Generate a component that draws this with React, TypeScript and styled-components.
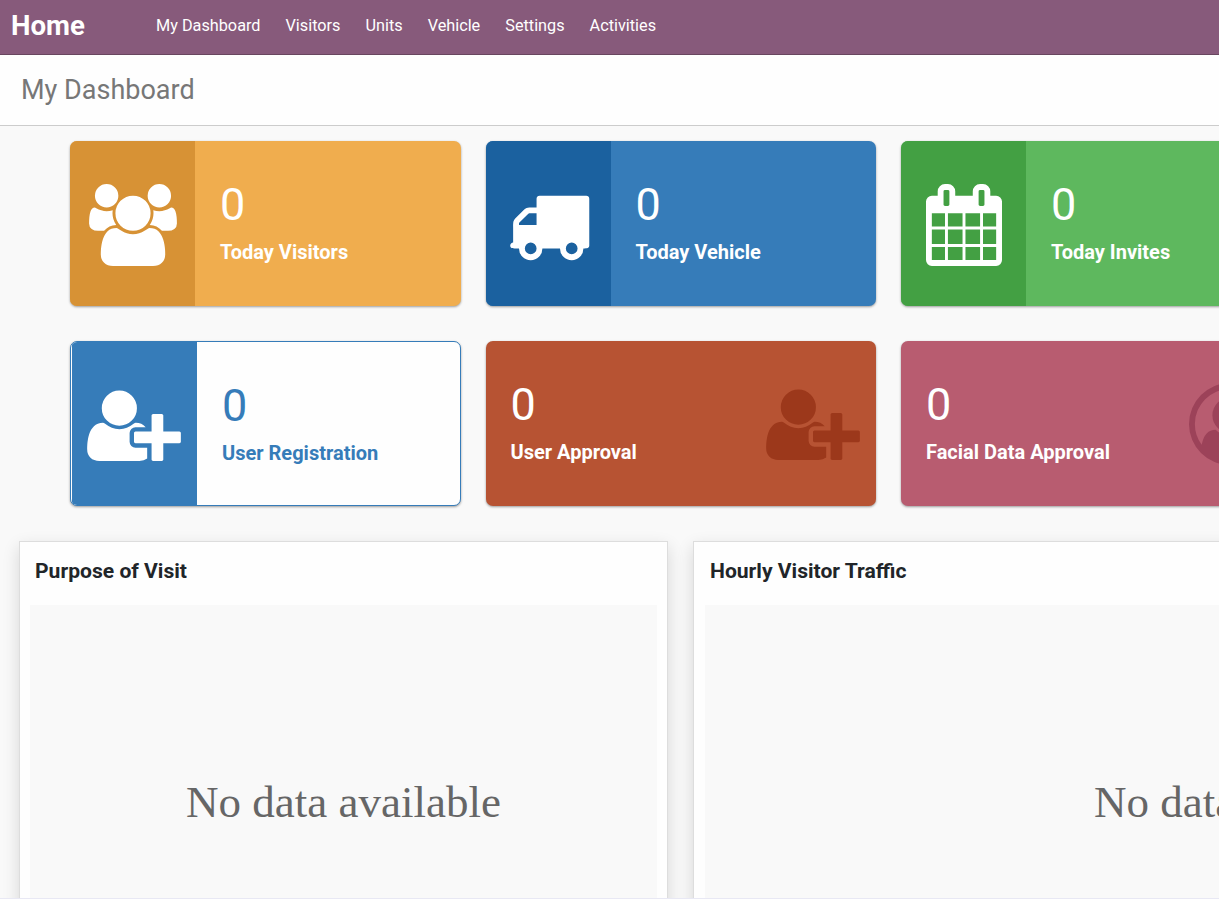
import React from 'react';
import styled, { createGlobalStyle } from 'styled-components';

const GlobalStyle = createGlobalStyle`
  * { box-sizing: border-box; }
  html, body { margin: 0; height: 100%; overflow: hidden; }
  body { background: #f9f9f9; font-family: Roboto, "Liberation Sans", sans-serif; }
`;

const Page = styled.div`
  width: 100%;
  height: 899px;
  overflow: hidden;
  display: flex;
  flex-direction: column;
  border-bottom: 1px solid #e8e8f4;
`;

const NavBar = styled.nav`
  flex: none;
  height: 55px;
  display: flex;
  align-items: center;
  padding: 0 0 2px 11px;
  background: #875a7b;
  border-bottom: 1px solid #68465f;
  color: #fff;
`;

const Brand = styled.a`
  width: 145px;
  font-size: 27.6px;
  font-weight: 700;
  line-height: 40px;
`;

const NavLinks = styled.div`
  display: flex;
  gap: 25px;
  font-size: 16.25px;
  line-height: 24px;
  white-space: nowrap;
`;

const NavLink = styled.a``;

const TitleBar = styled.header`
  flex: none;
  height: 71px;
  padding: 15px 21px;
  background: #fefefe;
  border-bottom: 1px solid #ccc;
`;

const Title = styled.h1`
  margin: 0;
  font-size: 27px;
  font-weight: 400;
  line-height: 40px;
  color: #777;
`;

const CardGrid = styled.section`
  flex: none;
  display: grid;
  grid-template-columns: repeat(3, 390.5px);
  grid-auto-rows: 165px;
  gap: 35px 25px;
  padding: 15px 0 0 70px;
`;

const Card = styled.article<{ $bg: string; $fg?: string; $outlined?: boolean }>`
  display: flex;
  overflow: hidden;
  border-radius: 7px;
  background: ${(p) => p.$bg};
  color: ${(p) => p.$fg ?? '#fff'};
  border: ${(p) => (p.$outlined ? `1px solid ${p.$fg}` : '0')};
  padding-left: ${(p) => (p.$outlined ? '1px' : '0')};
  box-shadow: 0 1px 3px rgba(0, 0, 0, 0.2), 0 1px 2px rgba(0, 0, 0, 0.2);
`;

const IconPane = styled.div<{ $bg: string; $nudge?: number }>`
  flex: none;
  width: 125px;
  display: flex;
  align-items: center;
  justify-content: center;
  padding: 2px ${(p) => p.$nudge ?? 0}px 0 0;
  background: ${(p) => p.$bg};
  color: #fff;
`;

const Stat = styled.div`
  flex: 1;
  padding: 34px 0 0 25px;
`;

const Count = styled.div`
  font-size: 45px;
  line-height: 60px;
`;

const Label = styled.div`
  margin-top: 4px;
  font-size: 20px;
  font-weight: 700;
  line-height: 26px;
  white-space: nowrap;
`;

const Watermark = styled.div<{ $color: string; $right: number }>`
  display: flex;
  align-items: center;
  padding: 1px ${(p) => p.$right}px 0 0;
  color: ${(p) => p.$color};
`;

const Glyph = styled.svg`
  display: block;
  flex: none;
  fill: currentColor;
`;

const Panels = styled.section`
  flex: none;
  display: flex;
  gap: 25px;
  padding: 35px 0 0 19px;
`;

const Panel = styled.article<{ $width: number; $inset: number }>`
  flex: none;
  width: ${(p) => p.$width}px;
  height: 480px;
  padding: 0 10px 0 ${(p) => p.$inset}px;
  background: #fefefe;
  border: 1px solid #ddd;
  box-shadow: 0 6px 16px rgba(0, 0, 0, 0.14);
`;

const PanelTitle = styled.h2`
  margin: 0;
  height: 63px;
  padding: 16px 5px 0;
  font-size: 21.1px;
  font-weight: 700;
  line-height: 26px;
  color: #212529;
`;

const EmptyChart = styled.div`
  height: 394px;
  display: flex;
  align-items: center;
  justify-content: center;
  background: #f9f9f9;
  color: #666;
  font-family: "Liberation Serif", serif;
  font-size: 45px;
  white-space: nowrap;
`;

const UsersIcon = () => (
  <Glyph width="88" height="82" viewBox="64 0 1920 1792">
    <path d="M657 896q-162 5-265 128H258q-82 0-138-40.5T64 865q0-353 124-353 6 0 43.5 21t97.5 42.5T448 597q67 0 133-23-5 37-5 66 0 139 81 256zm1071 637q0 120-73 189.5t-194 69.5H587q-121 0-194-69.5T320 1533q0-53 3.5-103.5t14-109T364 1212t43-97.5 62-81 85.5-53.5T666 960q10 0 43 21.5t73 48 107 48 135 21.5 135-21.5 107-48 73-48 43-21.5q61 0 111.5 20t85.5 53.5 62 81 43 97.5 26.5 108.5 14 109 3.5 103.5zM704 256q0 106-75 181t-181 75-181-75-75-181 75-181T448 0t181 75 75 181zm704 384q0 159-112.5 271.5T1024 1024 752.5 911.5 640 640t112.5-271.5T1024 256t271.5 112.5T1408 640zm576 225q0 78-56 118.5t-138 40.5h-134q-103-123-265-128 81-117 81-256 0-29-5-66 66 23 133 23 59 0 119-21.5t97.5-42.5 43.5-21q124 0 124 353zm-128-609q0 106-75 181t-181 75-181-75-75-181 75-181 181-75 181 75 75 181z" />
  </Glyph>
);

const TruckIcon = () => (
  <Glyph width="82" height="82" viewBox="-6 0 1792 1792" overflow="visible">
    <path
      fillRule="evenodd"
      d="M640 1408q0-52-38-90t-90-38-90 38-38 90 38 90 90 38 90-38 38-90zM256 896h384V640H482q-13 0-22 9L265 844q-9 9-9 22v30zm1280 512q0-52-38-90t-90-38-90 38-38 90 38 90 90 38 90-38 38-90zM1792 320V1344C1792 1400 1750 1408 1664 1408q0 106-75 181t-181 75-181-75-75-181H768q0 106-75 181t-181 75-181-75-75-181h-64C100 1408 64 1400 64 1344q0-26 19-45t45-19V960q0-8-.5-35t0-38 2.5-34.5 6.5-37 14-30.5 22.5-30l198-198q19-19 50.5-32t58.5-13h160V320q0-26 19-45t45-19h1024q26 0 45 19t19 45z"
    />
  </Glyph>
);

const CalendarIcon = () => (
  <Glyph width="76" height="82" viewBox="64 0 1664 1792">
    <path
      fillRule="evenodd"
      d="M192 1664h288v-288H192v288zm352 0h320v-288H544v288zM192 1312h288V992H192v320zm352 0h320V992H544v320zM192 928h288V640H192v288zm736 736h320v-288H928v288zM544 928h320V640H544v288zm768 736h288v-288h-288v288zm-384-352h320V992H928v320zM576 448V160q0-13-9.5-22.5T544 128h-64q-13 0-22.5 9.5T448 160v288q0 13 9.5 22.5T480 480h64q13 0 22.5-9.5T576 448zm736 864h288V992h-288v320zM928 928h320V640H928v288zm384 0h288V640h-288v288zm32-480V160q0-13-9.5-22.5T1312 128h-64q-13 0-22.5 9.5T1216 160v288q0 13 9.5 22.5T1248 480h64q13 0 22.5-9.5T1344 448zm384-64v1280q0 52-38 90t-90 38H192q-52 0-90-38t-38-90V384q0-52 38-90t90-38h128v-96q0-66 47-113T480 0h64q66 0 113 47t47 113v96h384v-96q0-66 47-113t113-47h64q66 0 113 47t47 113v96h128q52 0 90 38t38 90z"
    />
  </Glyph>
);

const UserPlusIcon = () => (
  <Glyph width="94" height="82" viewBox="0 -16 2048 1792">
    <path d="M704 896q-159 0-271.5-112.5T320 512t112.5-271.5T704 128t271.5 112.5T1088 512 975.5 783.5 704 896zm960 128h352q13 0 22.5 9.5t9.5 22.5v192q0 13-9.5 22.5t-22.5 9.5h-352v352q0 13-9.5 22.5t-22.5 9.5h-192q-13 0-22.5-9.5t-9.5-22.5v-352h-352q-13 0-22.5-9.5t-9.5-22.5v-192q0-13 9.5-22.5t22.5-9.5h352V672q0-13 9.5-22.5t22.5-9.5h192q13 0 22.5 9.5t9.5 22.5v352zm-736 224q0 52 38 90t90 38h256v238q-68 50-171 50H267q-121 0-194-69T0 1405q0-53 3.5-103.5t14-109T44 1084t43-97.5 62-81 85.5-53.5T346 832q19 0 39 17 79 61 154.5 91.5T704 971t164.5-30.5T1023 849q20-17 39-17 132 0 217 96h-223q-52 0-90 38t-38 90v192z" />
  </Glyph>
);

const UserCircleIcon = () => (
  <Glyph width="82" height="82" viewBox="0 0 1792 1792">
    <path
      fillRule="evenodd"
      d="M896 0q182 0 348 71t286 191 191 286 71 348q0 181-70.5 347t-190.5 286-286 191.5-349 71.5-349-71-285.5-191.5T70.5 1243.5 0 896t71-348 191-286T548 71 896 0zm619 1351q149-205 149-455 0-156-61-298t-164-245-245-164-298-61-298 61-245 164-164 245-61 298q0 250 149 455 66-327 306-327 131 128 313 128t313-128q240 0 306 327z"
    />
    <path d="M1280 704q0-159-112.5-271.5T896 320 624.5 432.5 512 704t112.5 271.5T896 1088t271.5-112.5T1280 704z" />
  </Glyph>
);

const menu = ['My Dashboard', 'Visitors', 'Units', 'Vehicle', 'Settings', 'Activities'];

type CardData = {
  label: string;
  bg: string;
  fg?: string;
  outlined?: boolean;
  pane?: string;
  nudge?: number;
  mark?: string;
  right?: number;
  Icon: React.ComponentType;
};

const cards: CardData[] = [
  { label: 'Today Visitors', bg: '#f0ad4e', pane: '#d79235', Icon: UsersIcon },
  { label: 'Today Vehicle', bg: '#367cb9', pane: '#1b619f', Icon: TruckIcon },
  { label: 'Today Invites', bg: '#5eb85e', pane: '#43a043', Icon: CalendarIcon },
  { label: 'User Registration', bg: '#fefefe', fg: '#367cb9', outlined: true, pane: '#367cb9', nudge: 2, Icon: UserPlusIcon },
  { label: 'User Approval', bg: '#b75333', mark: '#9c381b', right: 16, Icon: UserPlusIcon },
  { label: 'Facial Data Approval', bg: '#b85c70', mark: '#9c4259', right: 21, Icon: UserCircleIcon },
];

export default function App() {
  return (
    <>
      <GlobalStyle />
      <Page>
        <NavBar>
          <Brand>Home</Brand>
          <NavLinks>
            {menu.map((item) => (
              <NavLink key={item}>{item}</NavLink>
            ))}
          </NavLinks>
        </NavBar>
        <TitleBar>
          <Title>My Dashboard</Title>
        </TitleBar>
        <CardGrid>
          {cards.map(({ label, bg, fg, outlined, pane, nudge, mark, right, Icon }) => (
            <Card key={label} $bg={bg} $fg={fg} $outlined={outlined}>
              {pane && (
                <IconPane $bg={pane} $nudge={nudge}>
                  <Icon />
                </IconPane>
              )}
              <Stat>
                <Count>0</Count>
                <Label>{label}</Label>
              </Stat>
              {mark && (
                <Watermark $color={mark} $right={right ?? 0}>
                  <Icon />
                </Watermark>
              )}
            </Card>
          ))}
        </CardGrid>
        <Panels>
          <Panel $width={649} $inset={10}>
            <PanelTitle>Purpose of Visit</PanelTitle>
            <EmptyChart>No data available</EmptyChart>
          </Panel>
          <Panel $width={1116} $inset={11}>
            <PanelTitle>Hourly Visitor Traffic</PanelTitle>
            <EmptyChart>No data available</EmptyChart>
          </Panel>
        </Panels>
      </Page>
    </>
  );
}
